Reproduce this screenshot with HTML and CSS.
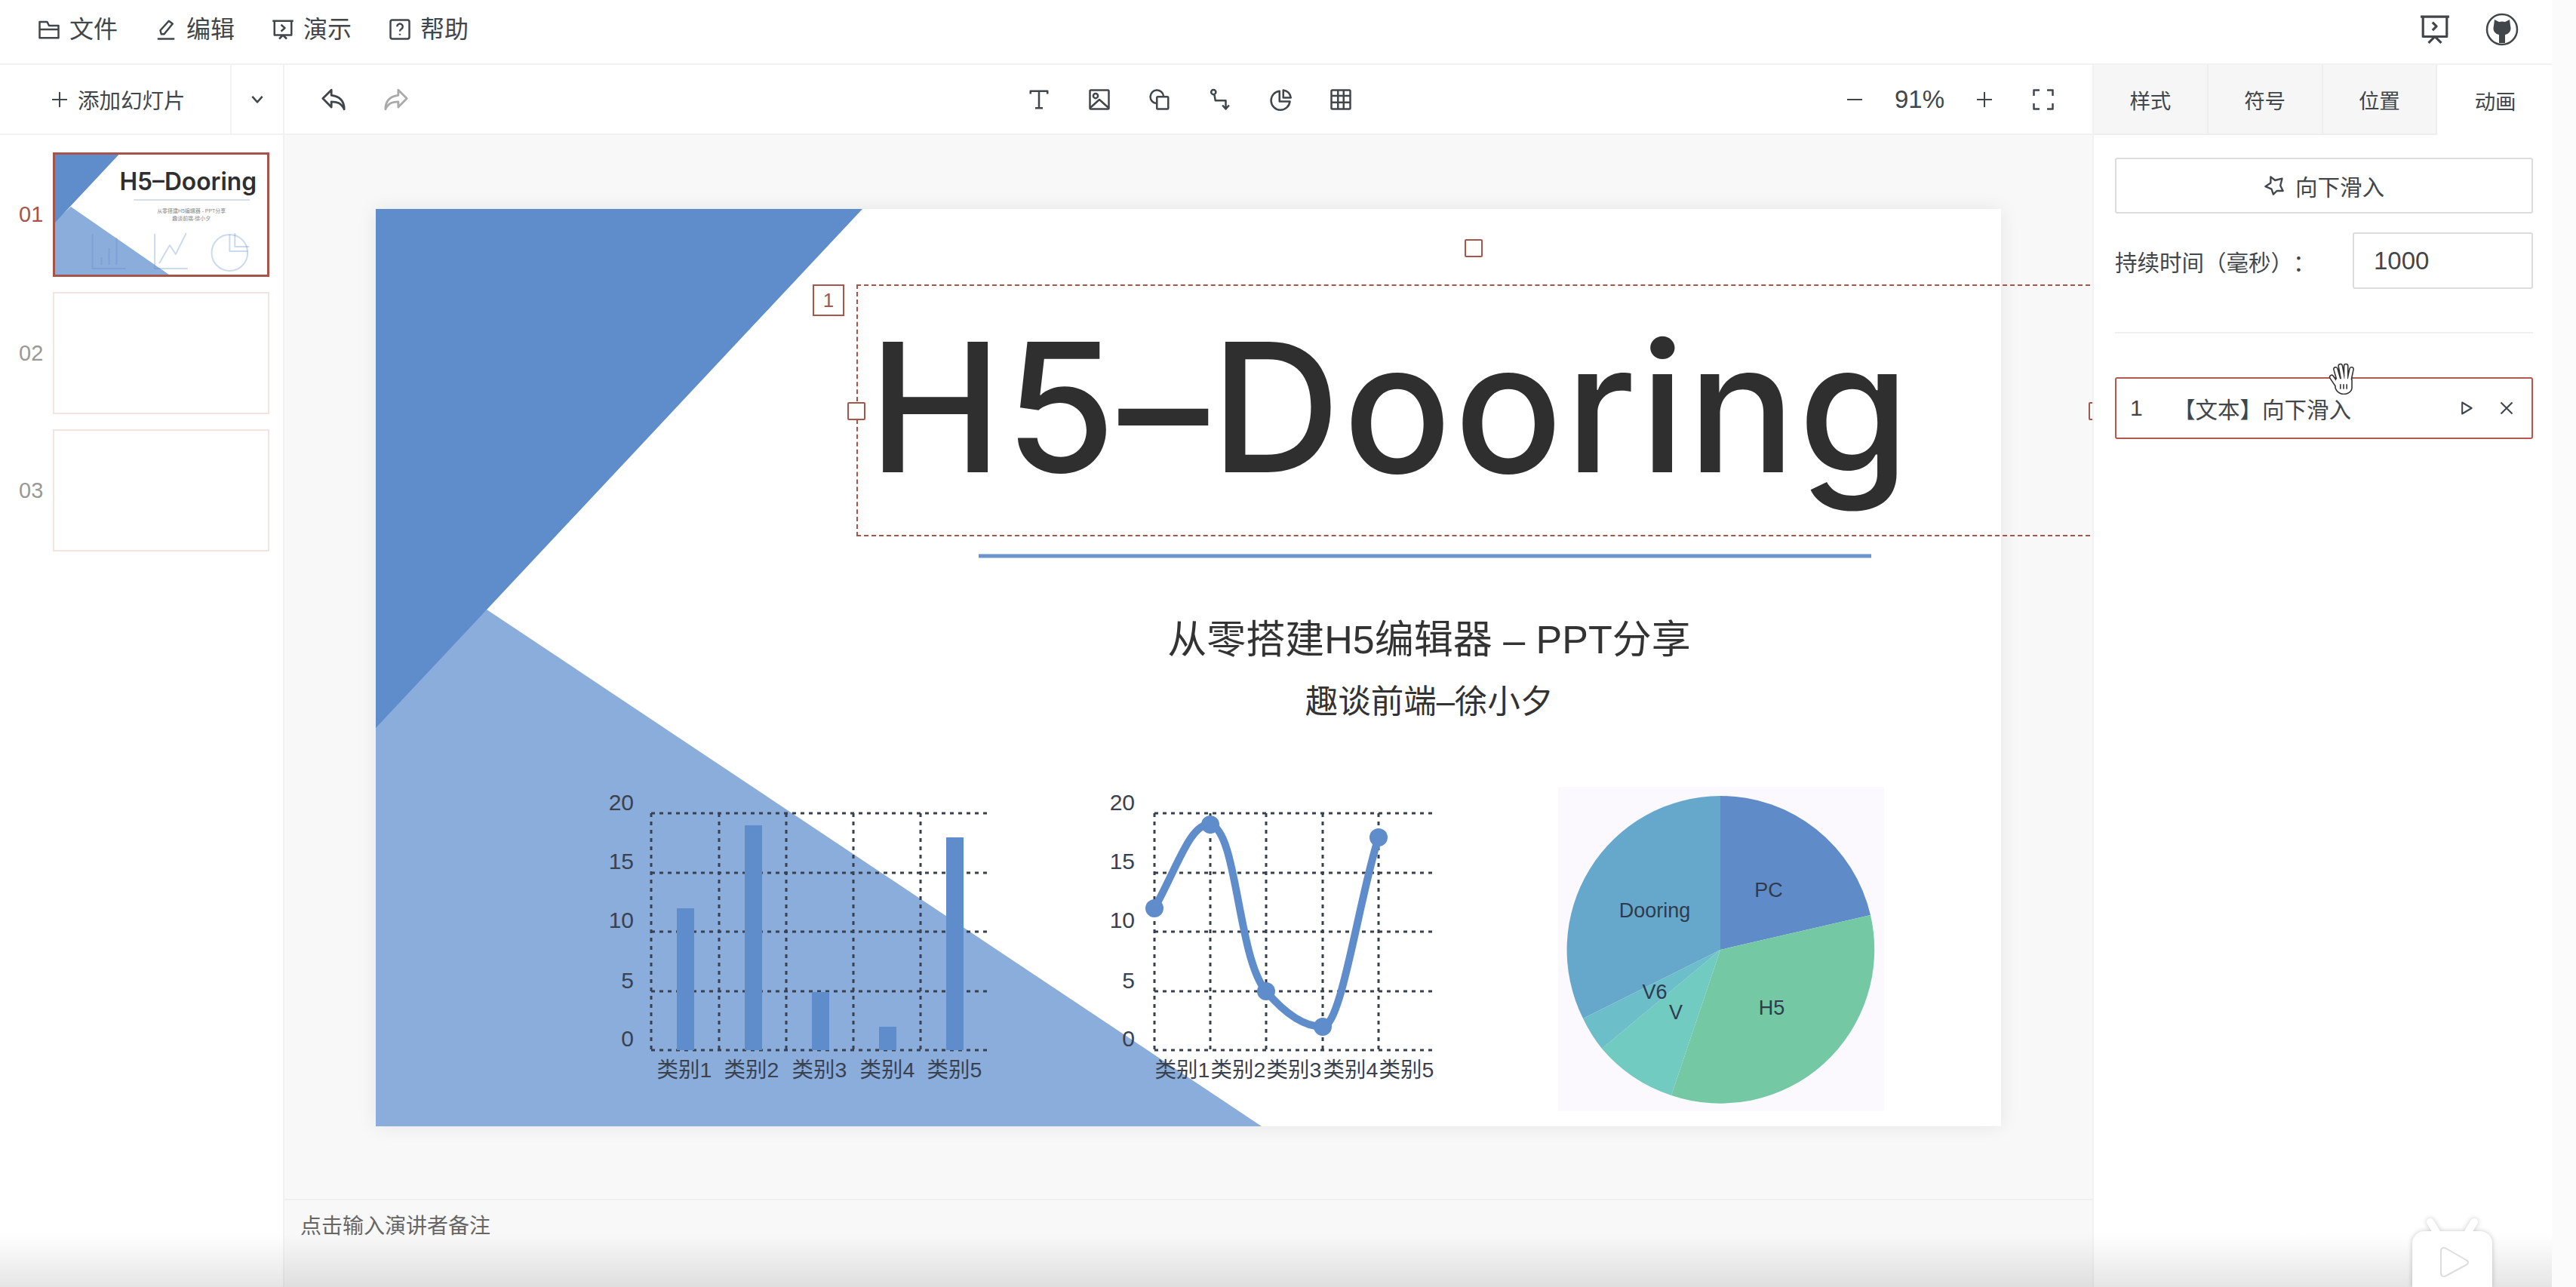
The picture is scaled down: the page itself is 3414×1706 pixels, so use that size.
FILE: index.html
```html
<!DOCTYPE html>
<html lang="zh-CN">

<head>
    <meta charset="UTF-8">
    <meta name="viewport" content="width=device-width, initial-scale=1.0">
    <title>PPTist</title>
    <link rel="stylesheet" href="styles.css">
</head>

<body>
    <div class="app">
        <header class="menubar">
            <nav class="menu">
                <span class="menu-item">
                    <svg class="icon" viewBox="0 0 24 24"><path d="M2 4h8l2 4h10v13H2zM2 12h20"/></svg>文件
                </span>
                <span class="menu-item">
                    <svg class="icon" viewBox="0 0 24 24"><path d="M7 17l-1-4L15 3l4 3-9 11zM3 22h18"/></svg>编辑
                </span>
                <span class="menu-item">
                    <svg class="icon" viewBox="0 0 24 24"><path d="M1 3h22M3 3v15h18V3M10 7l4 3.5-4 3.5M12 18l-4 4M12 18l4 4"/></svg>演示
                </span>
                <span class="menu-item">
                    <svg class="icon" viewBox="0 0 24 24"><rect x="2" y="2" width="20" height="20" rx="2"/><path d="M9 9a3 3 0 1 1 4.5 2.6c-1 .6-1.5 1.2-1.5 2.4M12 16.500v1.500"/></svg>帮助
                </span>
            </nav>
            <div class="menu-right">
                <svg class="icon-present" viewBox="0 0 38 38"><path d="M1 3h36M4 3v25h30V3M16 10l5 5-5 5M19 28l-8 8M19 28l8 8"/></svg>
                <svg class="icon-github" viewBox="0 0 44 44">
                    <circle cx="22" cy="22" r="20"/>
                    <path class="cat" d="M12 9l6 3a14 14 0 0 1 8 0l6-3 1 8c2 7-2 11-7 12v11h-8V29c-5-1-9-5-7-12z"/>
                </svg>
            </div>
        </header>

        <div class="workspace">
            <aside class="thumbs">
                <div class="thumbs-head">
                    <div class="add-slide">
                        <svg class="icon-small" viewBox="0 0 24 24"><path d="M12 2v20M2 12h20"/></svg>添加幻灯片
                    </div>
                    <div class="add-more">
                        <svg class="icon-chevron" viewBox="0 0 24 24"><path d="M4 7l8 9 8-9"/></svg>
                    </div>
                </div>
                <div class="thumb-list">
                    <div class="thumb-row active">
                        <span class="thumb-num">01</span>
                        <div class="thumb">
                            <svg class="thumb-art" viewBox="0 0 283 159" preserveAspectRatio="none">
                                <polygon points="21,69 152,159 0,159 0,88" fill="#8aaddb"/>
                                <polygon points="0,0 85,0 0,90" fill="#5f8ccb"/>
                                <text class="thumb-title" x="86" y="47">H5–Dooring</text>
                                <line x1="105" y1="60" x2="260" y2="60" stroke="#d5dfec" stroke-width="2"/>
                                <text class="thumb-sub" x="182" y="77">从零搭建H5编辑器 - PPT分享</text>
                                <text class="thumb-sub" x="182" y="87">趣谈前端-徐小夕</text>
                                <g class="thumb-icons">
                                    <path d="M50 105v46h44M62 146v-10M72 146v-22M82 146v-36"/>
                                    <path d="M133 105v46h44M139 144l14-24 8 12 14-28"/>
                                    <circle cx="233" cy="130" r="24"/>
                                    <path d="M233 106v22h24M240 104v18h19"/>
                                </g>
                            </svg>
                        </div>
                    </div>
                    <div class="thumb-row">
                        <span class="thumb-num">02</span>
                        <div class="thumb"></div>
                    </div>
                    <div class="thumb-row">
                        <span class="thumb-num">03</span>
                        <div class="thumb"></div>
                    </div>
                </div>
            </aside>

            <main class="stage">
                <div class="toolbar">
                    <div class="tool-left">
                        <svg class="icon-history" viewBox="0 0 24 24"><path d="M10 3L2 11l8 8v-5c5 0 9 1 12 7 0-8-4-12-12-13z"/></svg>
                        <svg class="icon-history dim" viewBox="0 0 24 24"><path d="M14 3l8 8-8 8v-5c-5 0-9 1-12 7 0-8 4-12 12-13z"/></svg>
                    </div>
                    <div class="tool-center">
                        <svg class="icon-tool" viewBox="0 0 24 24"><path d="M3 6V3h18v3M12 3v18M8 21h8"/></svg>
                        <svg class="icon-tool" viewBox="0 0 24 24"><rect x="2" y="2" width="20" height="20" rx="1"/><circle cx="8" cy="8" r="2.500"/><path d="M2 21l10-9 10 9"/></svg>
                        <svg class="icon-tool" viewBox="0 0 24 24"><path d="M8 16a7 7 0 1 1 8-8"/><rect x="9" y="9" width="12" height="13" rx="1"/></svg>
                        <svg class="icon-tool" viewBox="0 0 24 24"><circle cx="5" cy="4" r="2.500"/><path d="M6 7l1 6h11v8M14.500 18l3.500 4 3.500-4"/></svg>
                        <svg class="icon-tool" viewBox="0 0 24 24"><path d="M11 3a10 10 0 1 0 11 11H11zM15 2v8h8a9 9 0 0 0-8-8z"/></svg>
                        <svg class="icon-tool" viewBox="0 0 24 24"><rect x="2" y="2" width="20" height="20" rx="1"/><path d="M2 8h20M2 15h20M9 2v20M15 2v20"/></svg>
                    </div>
                    <div class="tool-right">
                        <svg class="icon-small" viewBox="0 0 24 24"><path d="M2 12h20"/></svg>
                        <span class="zoom-value">91%</span>
                        <svg class="icon-small" viewBox="0 0 24 24"><path d="M12 2v20M2 12h20"/></svg>
                        <svg class="icon-tool full" viewBox="0 0 24 24"><path d="M8 2H2v6M16 2h6v6M8 22H2v-6M16 22h6v-6"/></svg>
                    </div>
                </div>

                <div class="canvas">
                    <div class="slide">
                        <svg class="slide-art" viewBox="498 277 2154 1216">
                            <polygon points="645,808 1672,1493 498,1493 498,950" fill="#8aaddb"/>
                            <polygon points="498,277 1143,277 498,965" fill="#5f8ccb"/>
                            <line x1="1297" y1="737" x2="2480" y2="737" stroke="#6a94cd" stroke-width="5"/>

                            <!-- 柱状图 -->
                            <g class="grid">
                                <path d="M863 1078H1310M863 1157H1310M863 1235H1310M863 1314H1310M863 1392H1310"/>
                                <path d="M863 1078V1392M953 1078V1392M1042 1078V1392M1131 1078V1392M1220 1078V1392"/>
                            </g>
                            <g fill="#5f8ccb">
                                <rect x="897" y="1204" width="23" height="188"/>
                                <rect x="987" y="1094" width="23" height="298"/>
                                <rect x="1076" y="1315" width="23" height="77"/>
                                <rect x="1165" y="1361" width="23" height="31"/>
                                <rect x="1254" y="1110" width="23" height="282"/>
                            </g>
                            <g class="axis-y">
                                <text x="840" y="1074">20</text>
                                <text x="840" y="1152">15</text>
                                <text x="840" y="1230">10</text>
                                <text x="840" y="1310">5</text>
                                <text x="840" y="1387">0</text>
                            </g>
                            <g class="axis-x">
                                <text x="907" y="1428">类别1</text>
                                <text x="996" y="1428">类别2</text>
                                <text x="1086" y="1428">类别3</text>
                                <text x="1176" y="1428">类别4</text>
                                <text x="1265" y="1428">类别5</text>
                            </g>

                            <!-- 折线图 -->
                            <g class="grid">
                                <path d="M1530 1078H1902M1530 1157H1902M1530 1235H1902M1530 1314H1902M1530 1392H1902"/>
                                <path d="M1530 1078V1392M1604 1078V1392M1678 1078V1392M1753 1078V1392M1827 1078V1392"/>
                            </g>
                            <path class="curve" d="M1530 1204C1560 1150 1578 1090 1604 1093C1640 1100 1640 1270 1678 1314C1700 1340 1725 1361 1753 1361C1778 1361 1800 1195 1827 1110"/>
                            <g fill="#5f8ccb">
                                <circle cx="1530" cy="1204" r="12"/>
                                <circle cx="1604" cy="1093" r="12"/>
                                <circle cx="1678" cy="1314" r="12"/>
                                <circle cx="1753" cy="1361" r="12"/>
                                <circle cx="1827" cy="1110" r="12"/>
                            </g>
                            <g class="axis-y">
                                <text x="1504" y="1074">20</text>
                                <text x="1504" y="1152">15</text>
                                <text x="1504" y="1230">10</text>
                                <text x="1504" y="1310">5</text>
                                <text x="1504" y="1387">0</text>
                            </g>
                            <g class="axis-x">
                                <text x="1567" y="1428">类别1</text>
                                <text x="1641" y="1428">类别2</text>
                                <text x="1715" y="1428">类别3</text>
                                <text x="1790" y="1428">类别4</text>
                                <text x="1864" y="1428">类别5</text>
                            </g>

                            <!-- 饼图 -->
                            <rect x="2065" y="1043" width="432" height="430" fill="#fbf9fe"/>
                            <path d="M2280 1259V1055A204 204 0 0 1 2479 1213Z" fill="#5f8cc8"/>
                            <path d="M2280 1259L2479 1213A204 204 0 0 1 2215 1452Z" fill="#74c8a3"/>
                            <path d="M2280 1259L2215 1452A204 204 0 0 1 2123 1390Z" fill="#72cbc0"/>
                            <path d="M2280 1259L2123 1390A204 204 0 0 1 2098 1350Z" fill="#6cbec8"/>
                            <path d="M2280 1259L2098 1350A204 204 0 0 1 2280 1055Z" fill="#66a8cb"/>
                            <g class="pie-label">
                                <text x="2344" y="1189">PC</text>
                                <text x="2193" y="1216">Dooring</text>
                                <text x="2193" y="1324">V6</text>
                                <text x="2221" y="1351">V</text>
                                <text x="2348" y="1345">H5</text>
                            </g>
                        </svg>

                        <span class="handle handle-top"></span>
                        <div class="title-box">
                            <span class="title-badge">1</span>
                            <span class="handle handle-left"></span>
                            <span class="handle handle-right"></span>
                            <div class="title-text">H5–Dooring</div>
                        </div>
                        <div class="slide-sub">
                            <div class="sub-main">从零搭建H5编辑器 – PPT分享</div>
                            <div class="sub-author">趣谈前端–徐小夕</div>
                        </div>
                    </div>
                </div>

                <div class="notes">点击输入演讲者备注</div>
            </main>

            <aside class="panel">
                <div class="tabs">
                    <div class="tab">样式</div>
                    <div class="tab">符号</div>
                    <div class="tab">位置</div>
                    <div class="tab current">动画</div>
                </div>
                <div class="panel-body">
                    <div class="effect-btn">
                        <svg class="icon-star" viewBox="0 0 24 24"><path d="M8 2l5 4 8-2-2 8 3 6-7 0-4 4-2-6-7-3 6-4z"/></svg>向下滑入
                    </div>
                    <div class="duration">
                        <span>持续时间（毫秒）：</span>
                        <div class="duration-input">1000</div>
                    </div>
                    <div class="divider"></div>
                    <div class="anim-item">
                        <span class="anim-index">1</span>
                        <span class="anim-name">【文本】向下滑入</span>
                        <svg class="icon-mini" viewBox="0 0 24 24"><path d="M5 3l15 9-15 9z"/></svg>
                        <svg class="icon-mini" viewBox="0 0 24 24"><path d="M3 3l18 18M21 3L3 21"/></svg>
                        <svg class="hand" viewBox="0 0 38 40">
                            <g class="hand-out">
                                <path d="M9 8l4 14M15 4l3 16M22 4l0 16M29 8l-3 14M4 18l6 9"/>
                                <path d="M11 22h16v9c0 4-4 6-8 6s-7-3-8-6z"/>
                            </g>
                            <g class="hand-in">
                                <path d="M9 8l4 14M15 4l3 16M22 4l0 16M29 8l-3 14M4 18l6 9"/>
                                <path d="M11 22h16v9c0 4-4 6-8 6s-7-3-8-6z"/>
                            </g>
                            <path class="hand-line" d="M15 27v6M19 27v6M23 27v6"/>
                        </svg>
                    </div>
                </div>
            </aside>
        </div>

        <div class="bottom-shade"></div>
        <svg class="video-mark" viewBox="0 0 114 94">
            <path d="M36 20L28 7M78 20l8-13" class="mark-ear"/>
            <rect x="4" y="19" width="106" height="100" rx="16" fill="#fff"/>
            <path class="mark-play" d="M42 46c0-5 3-6 7-4l26 15c4 2 4 5 0 7L49 78c-4 2-7 1-7-4z"/>
        </svg>
    </div>
</body>

</html>
```

FILE: styles.css
```css
* {
    box-sizing: border-box;
}

html,
body {
    margin: 0;
    height: 100%;
    overflow: hidden;
    background-color: #fbfbfb;
}

body {
    font-family: "Liberation Sans", "Noto Sans CJK SC", sans-serif;
    color: #41464b;
    text-spacing-trim: space-all;
}

svg {
    fill: none;
    stroke: currentColor;
    stroke-width: 2;
    stroke-linejoin: round;
    flex-shrink: 0;
}

.app {
    position: relative;
    width: 3414px;
    height: 1706px;
    overflow: hidden;
}

/* 顶部菜单 */
.menubar {
    display: flex;
    justify-content: space-between;
    align-items: center;
    width: 3382px;
    height: 86px;
    padding: 0 44px 6px 50px;
    background: #fff;
    border-bottom: 2px solid #f2f2f2;
}

.menu {
    display: flex;
    gap: 49px;
}

.menu-item {
    display: flex;
    align-items: center;
    gap: 12px;
    font-size: 32px;
    line-height: 40px;
}

.icon {
    width: 30px;
    height: 30px;
}

.menu-right {
    display: flex;
    align-items: center;
    gap: 47px;
}

.icon-present {
    width: 40px;
    height: 40px;
    stroke-width: 3;
}

.icon-github {
    width: 44px;
    height: 44px;
    stroke-width: 2.500;
}

.icon-github .cat {
    fill: currentColor;
    stroke: none;
}

.workspace {
    display: flex;
    width: 3382px;
    height: 1620px;
}

/* 左侧缩略图 */
.thumbs {
    width: 377px;
    background: #fff;
    border-right: 2px solid #f2f2f2;
}

.thumbs-head {
    display: flex;
    height: 93px;
    border-bottom: 2px solid #f2f2f2;
}

.add-slide {
    display: flex;
    align-items: center;
    gap: 12px;
    width: 307px;
    padding-left: 67px;
    font-size: 28.500px;
    border-right: 2px solid #f2f2f2;
}

.add-more {
    display: flex;
    flex: 1;
    align-items: center;
    justify-content: center;
}

.icon-small {
    width: 24px;
    height: 24px;
    stroke-width: 2;
}

.icon-chevron {
    width: 20px;
    height: 20px;
    stroke-width: 3;
}

.thumb-list {
    display: flex;
    flex-direction: column;
    gap: 20px;
    padding-top: 23px;
}

.thumb-row {
    display: flex;
    align-items: center;
    padding-left: 25px;
}

.thumb-num {
    width: 45px;
    font-size: 29px;
    color: #999;
}

.active .thumb-num {
    color: #a5554a;
}

.thumb {
    width: 287px;
    height: 162px;
    border: 2px solid #f4e3e1;
}

.active .thumb {
    height: 165px;
    border: 3px solid #a5554a;
}

.thumb-art {
    display: block;
    width: 100%;
    height: 100%;
    stroke: none;
}

.thumb-title {
    font-family: Inter, "Liberation Sans", sans-serif;
    font-size: 32px;
    font-weight: 600;
    fill: #2f2f2f;
}

.thumb-sub {
    font-size: 7px;
    fill: #888;
    text-anchor: middle;
}

.thumb-icons {
    stroke: rgba(95, 140, 203, 0.32);
    stroke-width: 2;
}

/* 中间编辑区 */
.stage {
    display: flex;
    flex-direction: column;
    width: 2396px;
    background: #f8f8f8;
}

.toolbar {
    display: grid;
    grid-template-columns: 1fr auto 1fr;
    align-items: center;
    height: 93px;
    background: #fff;
    border-bottom: 2px solid #f2f2f2;
}

.tool-left {
    display: flex;
    gap: 49px;
    padding-left: 48px;
}

.tool-center {
    display: flex;
    gap: 50px;
    padding-left: 3px;
}

.tool-right {
    display: flex;
    align-items: center;
    justify-content: flex-end;
    padding-right: 50px;
}

.icon-tool {
    width: 30px;
    height: 30px;
}

.icon-history {
    width: 34px;
    height: 34px;
}

.dim {
    color: #aaa;
}

.zoom-value {
    width: 100px;
    margin: 0 24px;
    font-size: 33px;
    text-align: center;
}

.full {
    margin-left: 51px;
}

.canvas {
    flex: 1;
    padding: 98px 0 0 121px;
    overflow: hidden;
}

.slide {
    position: relative;
    width: 2154px;
    height: 1216px;
    background: #fff;
    box-shadow: 0 0 24px rgba(0, 0, 0, 0.08);
}

.slide-art {
    display: block;
    width: 100%;
    height: 100%;
    stroke: none;
}

.grid {
    stroke: #39414e;
    stroke-width: 3;
    stroke-dasharray: 5 6;
}

.axis-y text {
    font-size: 30px;
    fill: #3a4250;
    text-anchor: end;
}

.axis-x text {
    font-size: 28.500px;
    fill: #3a4250;
    text-anchor: middle;
}

.curve {
    stroke: #5f8ccb;
    stroke-width: 10;
    fill: none;
}

.pie-label text {
    font-size: 27px;
    fill: #2f3b4c;
    text-anchor: middle;
}

.title-box {
    position: absolute;
    left: 637px;
    top: 100px;
    width: 1645px;
    height: 334px;
    border: 2px dashed #a5554a;
}

.title-text {
    padding-left: 14px;
    font-family: Inter, "Liberation Sans", sans-serif;
    font-size: 238px;
    font-weight: 550;
    line-height: 320px;
    letter-spacing: 3.500px;
    color: #2f2f2f;
    white-space: nowrap;
}

.title-badge {
    position: absolute;
    left: -60px;
    top: -2px;
    width: 42px;
    height: 42px;
    font-size: 26px;
    line-height: 38px;
    text-align: center;
    color: #a5554a;
    background: #fff;
    border: 2px solid #a5554a;
}

.handle {
    position: absolute;
    width: 24px;
    height: 24px;
    background: #fff;
    border: 2px solid #a5554a;
    border-radius: 2px;
}

.handle-top {
    left: 1443px;
    top: 40px;
}

.handle-left {
    left: -14px;
    top: 154px;
}

.handle-right {
    right: -14px;
    top: 154px;
}

.slide-sub {
    position: absolute;
    left: 796px;
    top: 536px;
    width: 1200px;
    text-align: center;
    color: #333;
}

.sub-main {
    font-size: 52px;
    line-height: 70px;
}

.sub-author {
    margin-top: 18px;
    font-size: 43.500px;
    line-height: 58px;
}

.notes {
    display: flex;
    align-items: center;
    height: 117px;
    padding: 0 0 52px 21px;
    font-size: 28px;
    color: #666;
    background: #f8f8f8;
    border-top: 2px solid #efefef;
}

/* 右侧面板 */
.panel {
    width: 609px;
    background: #fff;
    border-left: 2px solid #f2f2f2;
}

.tabs {
    display: flex;
    height: 93px;
}

.tab {
    display: flex;
    flex: 1;
    align-items: center;
    justify-content: center;
    font-size: 27.500px;
    background: #f6f6f6;
    border-right: 2px solid #eee;
    border-bottom: 2px solid #eee;
}

.tab.current {
    padding-left: 2px;
    background: #fff;
    border: none;
}

.panel-body {
    padding: 30px 25px 0 28px;
}

.effect-btn {
    display: flex;
    align-items: center;
    justify-content: center;
    gap: 14px;
    height: 74px;
    font-size: 29.500px;
    border: 2px solid #dcdcdc;
    border-radius: 3px;
}

.icon-star {
    width: 28px;
    height: 28px;
}

.duration {
    display: flex;
    align-items: center;
    justify-content: space-between;
    margin-top: 25px;
    font-size: 29.500px;
}

.duration-input {
    width: 239px;
    height: 75px;
    padding-left: 26px;
    font-size: 33px;
    line-height: 71px;
    border: 2px solid #dcdcdc;
    border-radius: 3px;
}

.divider {
    margin-top: 57px;
    border-top: 2px solid #f0f0f0;
}

.anim-item {
    position: relative;
    display: flex;
    align-items: center;
    height: 82px;
    margin-top: 58px;
    padding: 0 23px 0 18px;
    font-size: 29.500px;
    border: 2px solid #b3584c;
    border-radius: 3px;
}

.anim-index {
    width: 57px;
    font-size: 30px;
}

.anim-name {
    flex: 1;
}

.icon-mini {
    width: 20px;
    height: 20px;
    margin-left: 33px;
    stroke-width: 2.500;
}

.hand {
    position: absolute;
    left: 281px;
    top: -21px;
    width: 40px;
    height: 42px;
    stroke: none;
}

.hand-out {
    stroke: #333;
    stroke-width: 6.500;
    stroke-linecap: round;
    fill: #333;
}

.hand-in {
    stroke: #fff;
    stroke-width: 3.500;
    stroke-linecap: round;
    fill: #fff;
}

.hand-line {
    stroke: #333;
    stroke-width: 1.500;
}

/* 底部阴影和水印 */
.bottom-shade {
    position: absolute;
    left: 0;
    bottom: 0;
    width: 3382px;
    height: 70px;
    background: linear-gradient(rgba(0, 0, 0, 0), rgba(0, 0, 0, 0.1));
}

.video-mark {
    position: absolute;
    left: 3193px;
    top: 1613px;
    width: 114px;
    height: 94px;
    stroke: none;
    filter: drop-shadow(0 0 3px rgba(0, 0, 0, 0.22));
}

.mark-ear {
    stroke: #fff;
    stroke-width: 10;
    stroke-linecap: round;
}

.mark-play {
    fill: #fff;
    stroke: #ddd;
    stroke-width: 2;
}
```
